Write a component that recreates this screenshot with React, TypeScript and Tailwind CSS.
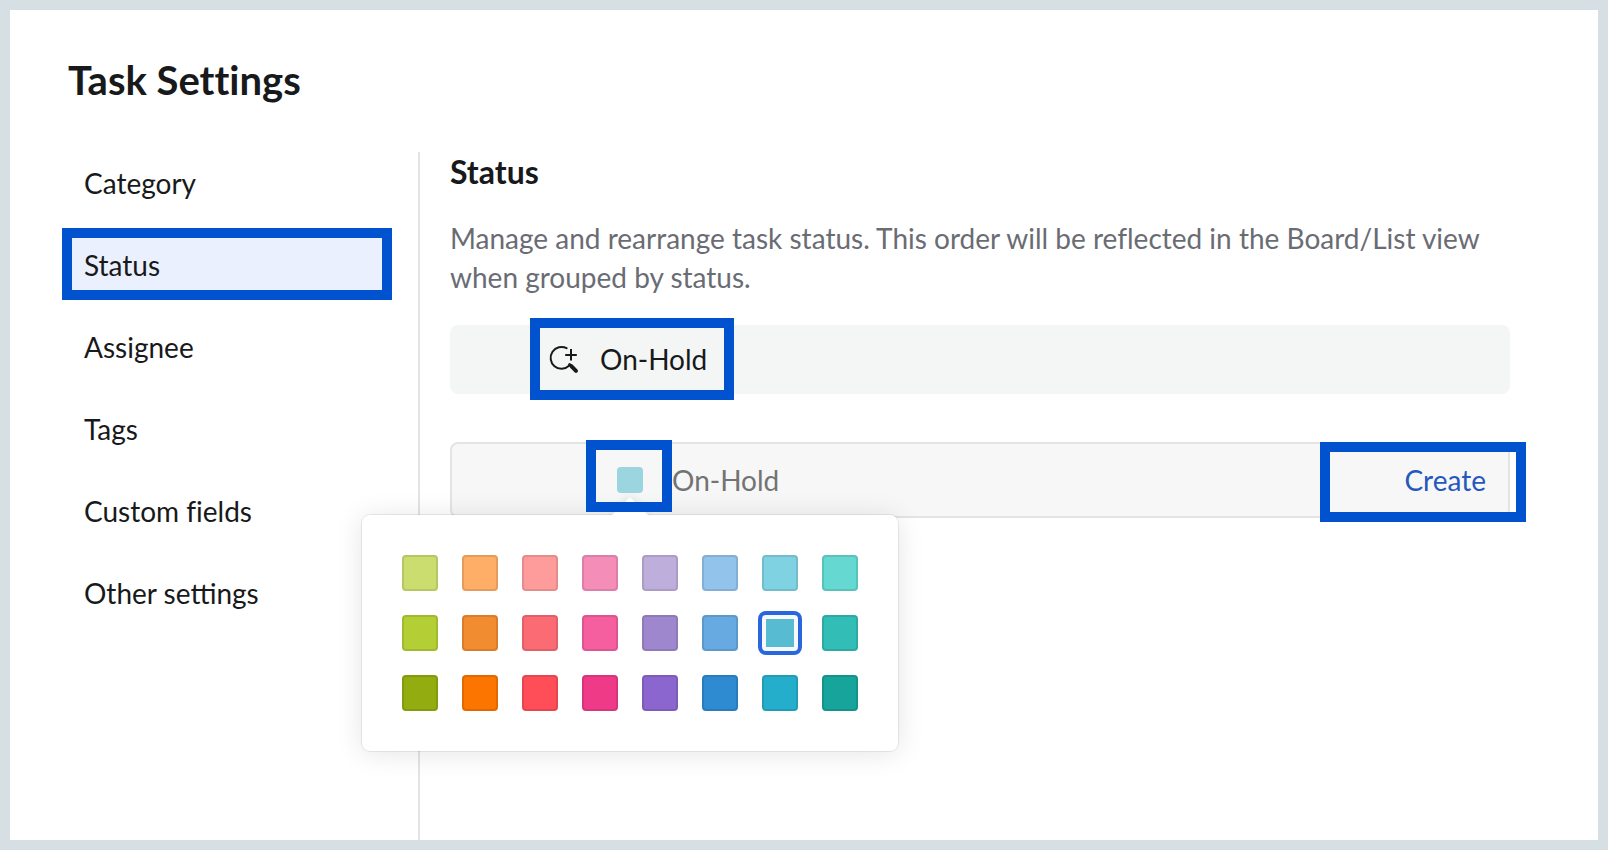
import { useState } from "react";

const sections = ["Category", "Status", "Assignee", "Tags", "Custom fields", "Other settings"];

const palette = [
  { name: "Light lime", fill: "bg-[#cbdd6e]" },
  { name: "Light orange", fill: "bg-[#feae67]" },
  { name: "Light red", fill: "bg-[#fe9b9b]" },
  { name: "Light pink", fill: "bg-[#f48eb9]" },
  { name: "Light purple", fill: "bg-[#beaedb]" },
  { name: "Light blue", fill: "bg-[#91c3eb]" },
  { name: "Light cyan", fill: "bg-[#7fd2e2]" },
  { name: "Light teal", fill: "bg-[#64d8d1]" },
  { name: "Lime", fill: "bg-[#b4ce35]" },
  { name: "Orange", fill: "bg-[#f28c31]" },
  { name: "Red", fill: "bg-[#fb6b74]" },
  { name: "Pink", fill: "bg-[#f65f9f]" },
  { name: "Purple", fill: "bg-[#9f87ce]" },
  { name: "Blue", fill: "bg-[#67aae1]" },
  { name: "Cyan", fill: "bg-[#57bbd2]" },
  { name: "Teal", fill: "bg-[#33bdb7]" },
  { name: "Dark lime", fill: "bg-[#93ac0f]" },
  { name: "Dark orange", fill: "bg-[#fc7500]" },
  { name: "Dark red", fill: "bg-[#ff4e57]" },
  { name: "Dark pink", fill: "bg-[#ef3b87]" },
  { name: "Dark purple", fill: "bg-[#8b66cf]" },
  { name: "Dark blue", fill: "bg-[#2e8bd1]" },
  { name: "Dark cyan", fill: "bg-[#24aecb]" },
  { name: "Dark teal", fill: "bg-[#17a49b]" },
];

function AddSearchIcon() {
  return (
    <svg width="30" height="30" viewBox="0 0 30 30" fill="none" stroke="currentColor" aria-hidden="true">
      <path d="M17.6 4.2A10.9 10.9 0 1 0 20 21.8" strokeWidth="2" strokeLinecap="round" />
      <path d="M22 5v11.6M16.2 11h11.6" strokeWidth="2" />
      <path d="M20.6 20.6 22.4 22" strokeWidth="3" strokeLinecap="round" />
      <path d="M22.6 22.4 27 26.8" strokeWidth="4" strokeLinecap="round" />
    </svg>
  );
}

function ColorPicker({ selected, onSelect }: { selected: string; onSelect: (name: string) => void }) {
  return (
    <div className="absolute -left-[90px] top-[71px] z-10 rounded-lg bg-white p-10 shadow-[0_0_0_1px_rgba(0,0,0,0.07),0_2px_28px_rgba(0,0,0,0.11)]">
      <svg
        className="absolute -top-[18px] left-[250px] drop-shadow-[0_0_4px_rgba(0,0,0,0.12)] [clip-path:inset(-12px_-12px_0_-12px)]"
        width="36"
        height="19"
        viewBox="0 0 36 19"
        aria-hidden="true"
      >
        <path d="M0 19V18L18 0 36 18V19Z" fill="#fff" />
      </svg>
      <div className="grid grid-cols-8 gap-6">
        {palette.map(({ name, fill }) => (
          <button
            key={name}
            type="button"
            aria-label={name}
            aria-pressed={name === selected}
            onClick={() => onSelect(name)}
            className={
              name === selected
                ? `size-9 border-4 border-[#f7f8f9] rounded-sm ring-4 ring-[#2a66de] ${fill}`
                : `size-9 border-2 border-black/10 rounded-sm ${fill}`
            }
          />
        ))}
      </div>
    </div>
  );
}

export default function App() {
  const [section, setSection] = useState("Status");
  const [color, setColor] = useState("Cyan");
  const [name, setName] = useState("On-Hold");

  return (
    <div className="flex min-h-screen flex-col border-10 border-[#d6dfe4] bg-white pt-[46px] pr-[88px] pl-[52px] font-['Lato',sans-serif] text-[28px] text-[#18191b]">
      <h1 className="pl-1.5 text-[40px] leading-12 font-bold [font-variant-ligatures:none]">Task Settings</h1>
      <div className="mt-[42px] flex flex-1">
        <nav className="flex w-[330px] shrink-0 flex-col gap-2.5" aria-label="Task settings">
          {sections.map((item) => (
            <button
              key={item}
              type="button"
              onClick={() => setSection(item)}
              className={
                item === section
                  ? "h-18 border-10 border-[#0052cf] bg-[#eaf0fe] px-3 pt-0.5 text-left"
                  : "h-18 border-10 border-transparent px-3 pt-0.5 text-left"
              }
            >
              <span className={item.includes("fi") ? "[font-variant-ligatures:none]" : undefined}>{item}</span>
            </button>
          ))}
        </nav>
        <main className="mt-1.5 ml-[26px] min-w-0 flex-1 border-l-2 border-[#e4e4e4] pl-[30px]">
          <h2 className="text-[32px] leading-10 font-bold">Status</h2>
          <p className="mt-[27px] leading-[39px] text-[#6a6c74] [font-variant-ligatures:none]">
            Manage and rearrange task status. This order will be reflected in the Board/List view when grouped by
            status.
          </p>
          <div className="mt-7 flex h-[69px] items-start rounded-lg bg-[#f4f6f6] pt-[3px] pl-[90px]">
            <button
              type="button"
              className="flex h-[62px] w-[184px] items-center gap-[21px] pl-[9px] outline-10 outline-[#0052cf]"
            >
              <AddSearchIcon />
              On-Hold
            </button>
          </div>
          <form
            className="relative mt-12 flex h-[76px] items-center rounded-lg border-2 border-[#e4e4e4] bg-[#f7f7f7] pr-[22px] pl-[165px]"
            onSubmit={(event) => event.preventDefault()}
          >
            <button type="button" aria-label="Status color" className="size-[26px] rounded-sm bg-[#9ad5e0]" />
            <span className="pointer-events-none absolute -top-1 left-[134px] z-20 h-18 w-[86px] border-10 border-[#0052cf]" />
            <input
              aria-label="Status name"
              value={name}
              onChange={(event) => setName(event.target.value)}
              className="ml-[29px] min-w-0 flex-1 bg-transparent text-[#737373] outline-none"
            />
            <button type="submit" className="text-[#2558be]">
              Create
            </button>
            <span className="pointer-events-none absolute -top-0.5 -right-[18px] h-20 w-[206px] border-10 border-[#0052cf]" />
            <ColorPicker selected={color} onSelect={setColor} />
          </form>
        </main>
      </div>
    </div>
  );
}
